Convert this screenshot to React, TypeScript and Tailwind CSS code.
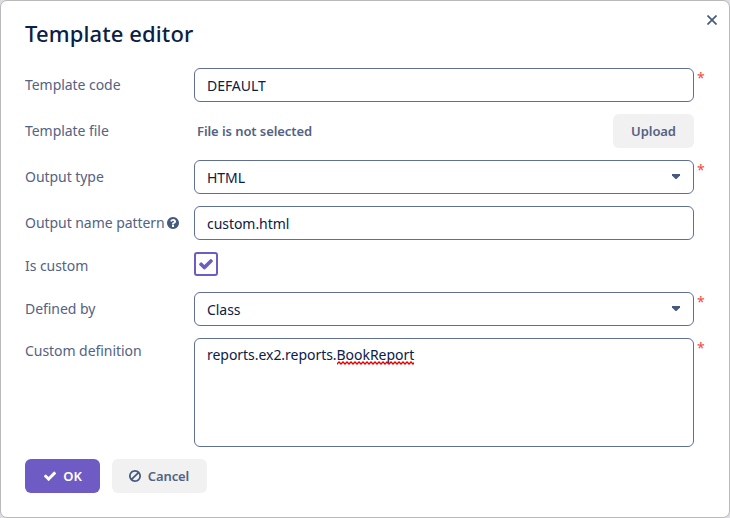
import type { ReactNode } from "react";

const CHECK =
  "M1671 566q0 40-28 68l-724 724-136 136q-28 28-68 28t-68-28l-136-136-362-362q-28-28-28-68t28-68l136-136q28-28 68-28t68 28l294 295 656-657q28-28 68-28t68 28l136 136q28 28 28 68z";
const BAN =
  "M1440 893q0-161-87-295l-754 753q137 89 297 89 111 0 211.5-43.5t173.5-116.5 116-174.5 43-212.5zm-999 299l755-754q-135-91-300-91-148 0-273 73t-198 199-73 274q0 162 89 299zm1223-299q0 157-61 300t-163.5 246-245 164-298.5 61-298.5-61-245-164-163.5-246-61-300 61-299.5 163.5-245.5 245-164 298.5-61 298.5 61 245 164 163.5 245.5 61 299.5z";
const HELP =
  "M1024 1376v-192q0-14-9-23t-23-9h-192q-14 0-23 9t-9 23v192q0 14 9 23t23 9h192q14 0 23-9t9-23zm256-672q0-88-55.5-163t-138.5-116-170-41q-243 0-371 213-15 24 8 42l132 100q7 6 19 6 16 0 25-12 53-68 86-92 34-24 86-24 48 0 85.5 26t37.5 59q0 38-20 61t-68 45q-63 28-115.5 86.5t-52.5 125.5v36q0 14 9 23t23 9h192q14 0 23-9t9-23q0-19 21.5-49.5t54.5-49.5q32-18 49-28.5t46-35 44.5-48 28-60.5 12.5-81zm384 192q0 209-103 385.5t-279.5 279.5-385.5 103-385.5-103-279.5-279.5-103-385.5 103-385.5 279.5-279.5 385.5-103 385.5 103 279.5 279.5 103 385.5z";

function Icon({ path, className }: { path: string; className: string }) {
  return (
    <svg viewBox="0 0 1792 1792" fill="currentColor" className={className} aria-hidden="true">
      <path d={path} />
    </svg>
  );
}

type RowProps = {
  label: string;
  help?: boolean;
  required?: boolean;
  labelClass?: string;
  children: ReactNode;
};

function Row({ label, help, required, labelClass = "h-[34px]", children }: RowProps) {
  return (
    <div className="flex items-start">
      <div className={`flex w-[169px] shrink-0 items-center tracking-[-0.05px] text-[#546283] ${labelClass}`}>
        {label}
        {help && <Icon path={HELP} className="ml-px size-[14px] text-[#465a80]" />}
      </div>
      <div className="w-[500px] shrink-0">{children}</div>
      {required && <span className="ml-[3px] text-[14px] leading-5 text-[#f4473c]">*</span>}
    </div>
  );
}

function Field({ value, select }: { value: string; select?: boolean }) {
  return (
    <div className="flex h-[34px] items-center justify-between rounded-[6px] border border-[#5f6f98] pl-3 pr-3 pt-px text-[#0b2046]">
      <span className="tracking-[-0.05px]">{value}</span>
      {select && (
        <svg viewBox="0 0 8 5" className="mb-[3px] mr-px h-[5px] w-2" fill="#465a80" aria-hidden="true">
          <path d="M0 0h8v1.500L4.500 5h-1L0 1.500z" />
        </svg>
      )}
    </div>
  );
}

// Spell-check wave drawn under a word the dictionary does not know.
function Misspelled({ children }: { children: ReactNode }) {
  return (
    <span className="relative inline-block">
      {children}
      <svg className="absolute bottom-0 left-0 h-[4px] w-full" aria-hidden="true">
        <defs>
          <pattern id="wave" width="4" height="4" patternUnits="userSpaceOnUse">
            <path d="M-1 2L0 3l2-2 2 2 1-1" fill="none" stroke="#e80000" strokeWidth="1.3" />
          </pattern>
        </defs>
        <rect width="100%" height="4" fill="url(#wave)" />
      </svg>
    </span>
  );
}

export default function App() {
  return (
    <div className="h-[518px] w-[730px] bg-[#dcdce2] font-['Noto_Sans','Open_Sans',sans-serif] text-[14px] leading-5">
      <div className="flex h-full flex-col rounded-[7px] border border-[#b9b9b9] bg-white pl-6">
        <header className="flex h-[67px] items-start justify-between pr-3">
          <h1 className="mt-[17px] text-[22px] font-medium leading-[30px] tracking-[0.12px] text-[#0b2046]">Template editor</h1>
          <svg viewBox="0 0 10 10" className="mt-[14px] size-[10px]" fill="none" stroke="#465a80" strokeWidth="1.7" aria-label="Close">
            <path d="M.5.5l9 9M9.500.5l-9 9" />
          </svg>
        </header>
        <main className="flex flex-col gap-3">
          <Row label="Template code" required>
            <Field value="DEFAULT" />
          </Row>
          <Row label="Template file">
            <div className="flex h-[34px] items-center justify-between text-[13px] font-semibold tracking-[-0.08px] text-[#546283]">
              <span className="ml-[3px]">File is not selected</span>
              <button className="h-[34px] w-[81px] rounded-[6px] bg-[#f1f1f1]">Upload</button>
            </div>
          </Row>
          <Row label="Output type" required>
            <Field value="HTML" select />
          </Row>
          <Row label="Output name pattern" help>
            <Field value="custom.html" />
          </Row>
          <Row label="Is custom" labelClass="h-7">
            <div className="flex size-6 items-center justify-center rounded-[3px] border-2 border-[#6e5bc3] text-[#6e5bc3]">
              <Icon path={CHECK} className="size-4" />
            </div>
          </Row>
          <Row label="Defined by" required>
            <Field value="Class" select />
          </Row>
          <Row label="Custom definition" required labelClass="h-[26px]">
            <div className="h-[109px] rounded-[6px] border border-[#5f6f98] px-3 pt-[6px] tracking-[-0.04px] text-[#0b2046]">
              reports.ex2.reports.
              <Misspelled>BookReport</Misspelled>
            </div>
          </Row>
        </main>
        <footer className="mt-3 flex gap-3 text-[13px] font-semibold tracking-[-0.1px]">
          <button className="flex h-[34px] w-[75px] items-center justify-center gap-[6px] rounded-[6px] bg-[#6e5bc3] text-white">
            <Icon path={CHECK} className="size-[14px]" />
            OK
          </button>
          <button className="flex h-[34px] w-[95px] items-center justify-center gap-[6px] rounded-[6px] bg-[#f1f1f1] pr-[2px] text-[#546283]">
            <Icon path={BAN} className="size-[14px] text-[#465a80]" />
            Cancel
          </button>
        </footer>
      </div>
    </div>
  );
}
